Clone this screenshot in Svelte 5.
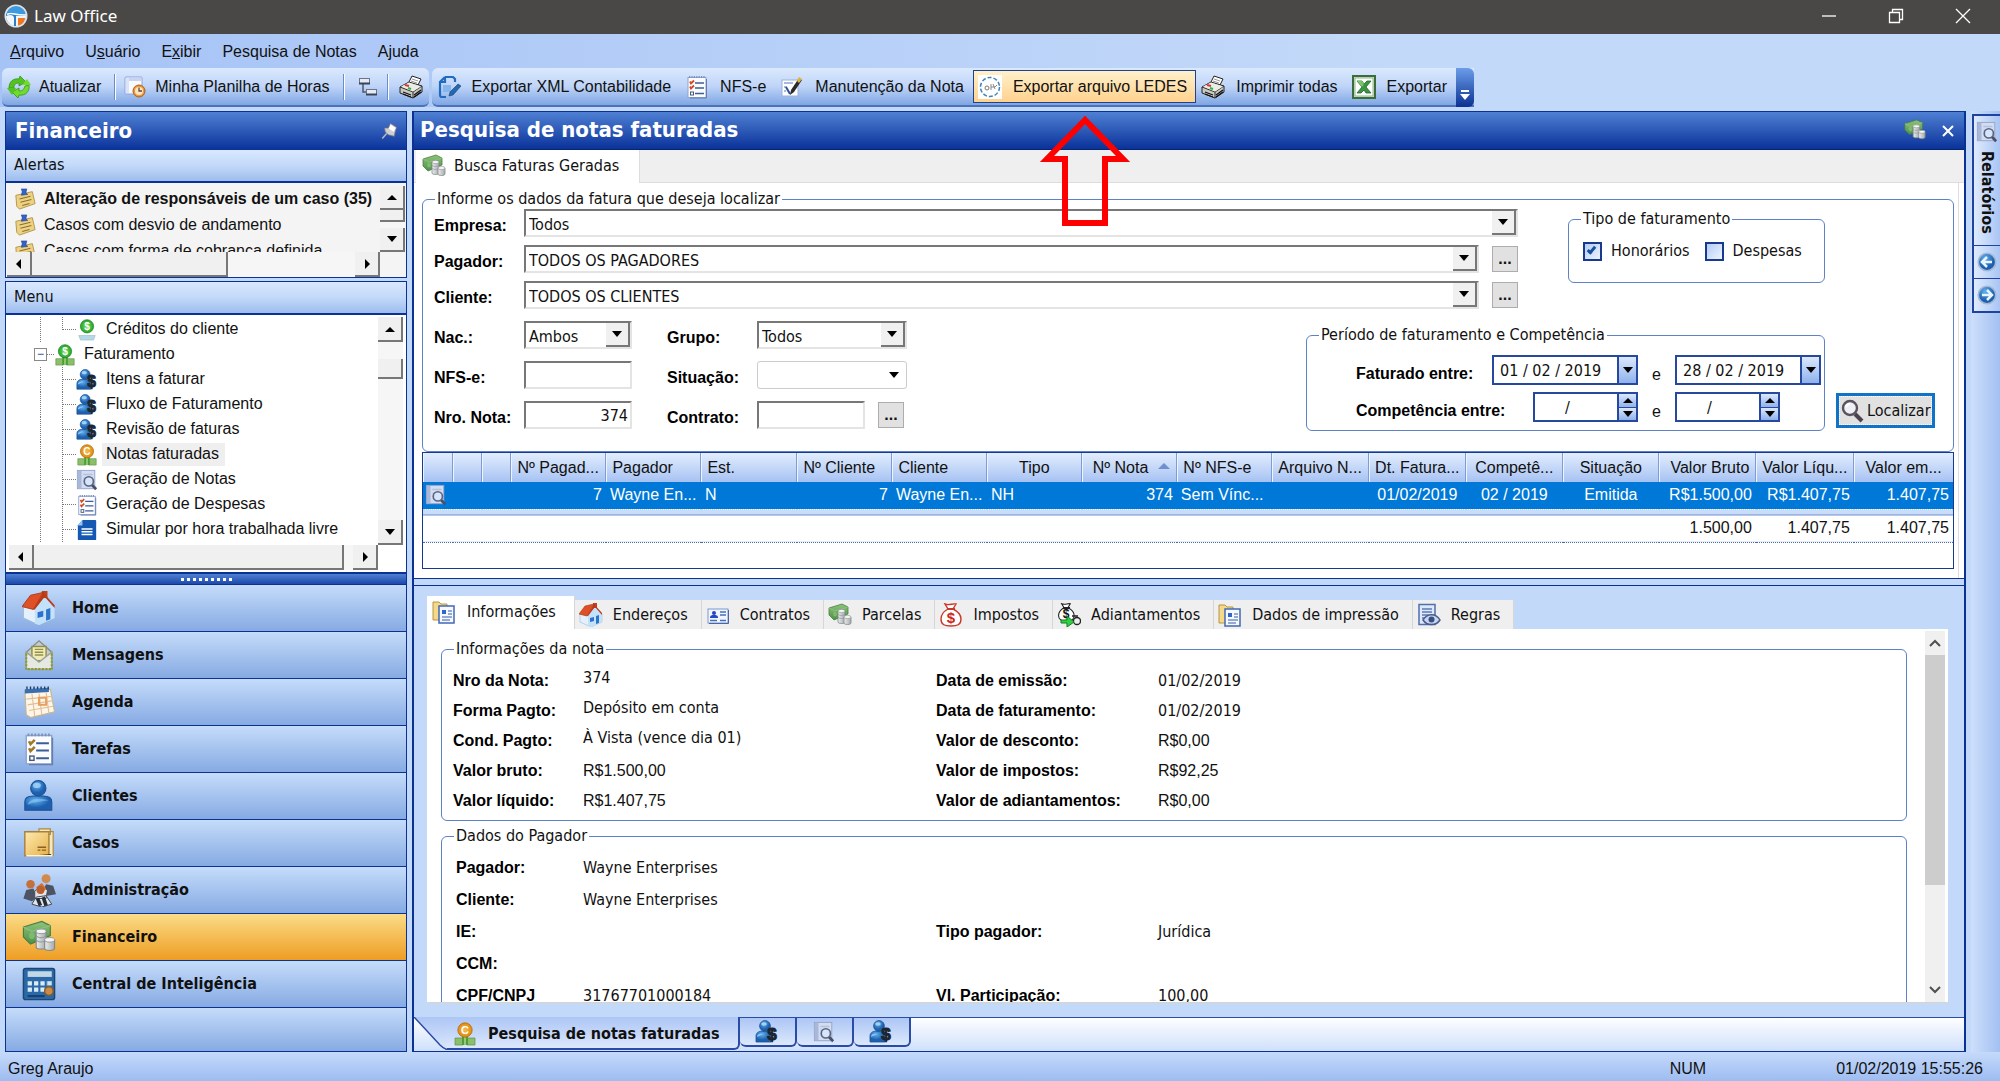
<script lang="ts">
	type NavItem = { label: string; icon: string };
	type Column = { label: string; width: number; align?: string; head?: string; sorted?: boolean };

	let activeNav = $state('Financeiro');
	let activeTab = $state('Informações');
	let fees = $state(true);
	let expenses = $state(false);

	const menus = [
		['', 'A', 'rquivo'],
		['U', 's', 'uário'],
		['E', 'x', 'ibir'],
		['Pesquisa de Notas', '', ''],
		['A', 'j', 'uda']
	];

	const tools: NavItem[] = [
		{ label: 'Exportar XML Contabilidade', icon: 'export' },
		{ label: 'NFS-e', icon: 'list' },
		{ label: 'Manutenção da Nota', icon: 'edit' },
		{ label: 'Exportar arquivo LEDES', icon: 'ledes' },
		{ label: 'Imprimir todas', icon: 'printer' },
		{ label: 'Exportar', icon: 'excel' }
	];

	const alerts = [
		'Alteração de responsáveis de um caso (35)',
		'Casos com desvio de andamento',
		'Casos com forma de cobrança definida'
	];

	const treeItems: NavItem[] = [
		{ label: 'Itens a faturar', icon: 'payer' },
		{ label: 'Fluxo de Faturamento', icon: 'payer' },
		{ label: 'Revisão de faturas', icon: 'payer' },
		{ label: 'Notas faturadas', icon: 'invoice' },
		{ label: 'Geração de Notas', icon: 'preview' },
		{ label: 'Geração de Despesas', icon: 'list' },
		{ label: 'Simular por hora trabalhada livre', icon: 'doc' }
	];

	const nav: NavItem[] = [
		{ label: 'Home', icon: 'house' },
		{ label: 'Mensagens', icon: 'mail' },
		{ label: 'Agenda', icon: 'calendar' },
		{ label: 'Tarefas', icon: 'tasks' },
		{ label: 'Clientes', icon: 'person' },
		{ label: 'Casos', icon: 'folder' },
		{ label: 'Administração', icon: 'team' },
		{ label: 'Financeiro', icon: 'money' },
		{ label: 'Central de Inteligência', icon: 'calc' }
	];

	const columns: Column[] = [
		{ label: '', width: 30 },
		{ label: '', width: 29 },
		{ label: '', width: 29 },
		{ label: 'Nº Pagad...', width: 95, align: 'right', head: 'left' },
		{ label: 'Pagador', width: 95 },
		{ label: 'Est.', width: 96 },
		{ label: 'Nº Cliente', width: 95, align: 'right', head: 'left' },
		{ label: 'Cliente', width: 95 },
		{ label: 'Tipo', width: 95, head: 'center' },
		{ label: 'Nº Nota', width: 95, align: 'right', sorted: true },
		{ label: 'Nº NFS-e', width: 95 },
		{ label: 'Arquivo N...', width: 97 },
		{ label: 'Dt. Fatura...', width: 97, align: 'center' },
		{ label: 'Competê...', width: 97, align: 'center' },
		{ label: 'Situação', width: 96, align: 'center' },
		{ label: 'Valor Bruto', width: 97, align: 'right' },
		{ label: 'Valor Líqu...', width: 98, align: 'right' },
		{ label: 'Valor em...', width: 99, align: 'right', head: 'center' }
	];
	const totalWidth = columns.reduce((sum, c) => sum + c.width, 0);

	const row = ['', '', '', '7', 'Wayne En...', 'N', '7', 'Wayne En...', 'NH', '374', 'Sem Vínc...', '', '01/02/2019', '02 / 2019', 'Emitida', 'R$1.500,00', 'R$1.407,75', '1.407,75'];
	const totals = ['1.500,00', '1.407,75', '1.407,75'];

	const detailTabs: NavItem[] = [
		{ label: 'Informações', icon: 'info' },
		{ label: 'Endereços', icon: 'house' },
		{ label: 'Contratos', icon: 'card' },
		{ label: 'Parcelas', icon: 'money' },
		{ label: 'Impostos', icon: 'tax' },
		{ label: 'Adiantamentos', icon: 'advance' },
		{ label: 'Dados de impressão', icon: 'info' },
		{ label: 'Regras', icon: 'rules' }
	];

	const noteInfo = [
		['Nro da Nota:', '374', 'Data de emissão:', '01/02/2019'],
		['Forma Pagto:', 'Depósito em conta', 'Data de faturamento:', '01/02/2019'],
		['Cond. Pagto:', 'À Vista (vence dia 01)', 'Valor de desconto:', 'R$0,00'],
		['Valor bruto:', 'R$1.500,00', 'Valor de impostos:', 'R$92,25'],
		['Valor líquido:', 'R$1.407,75', 'Valor de adiantamentos:', 'R$0,00']
	];

	const payerInfo = [
		['Pagador:', 'Wayne Enterprises', '', ''],
		['Cliente:', 'Wayne Enterprises', '', ''],
		['IE:', '', 'Tipo pagador:', 'Jurídica'],
		['CCM:', '', '', ''],
		['CPF/CNPJ', '31767701000184', 'Vl. Participação:', '100,00']
	];

	// values typed in as money keep the grid face
	const isMoney = (value: string) => value.startsWith('R$');
</script>

{#snippet icon(name: string, size: number = 24)}
	<svg class="icon" width={size} height={size} viewBox="0 0 24 24" aria-hidden="true">
		{#if name === 'logo'}
			<circle cx="12" cy="12" r="11.5" fill="#dfe3e8" />
			<circle cx="12" cy="12" r="10" fill="#3d9ade" />
			<path d="M2 11c4-3 8-1 10 1v10C6 22 2 17 2 11z" fill="#f2f6fa" />
			<path d="M2 10c3-3 8-2 10 1v11h-2v-8c0-3-4-4-8-2z" fill="#2b7fca" />
			<path d="M12 12h10c0 6-4 10-10 10z" fill="#f2f6fa" />
			<path d="M14 14h7c0 4-3 7-7 7.500z" fill="#ef7722" />
			<path d="M3 10.500c5-3 7 1 19 .5" stroke="#fff" stroke-width="1.500" fill="none" />
		{:else if name === 'refresh'}
			<path d="M2 13c0-6 4-10 10-9l1-3 6 6-7 4V8c-3 0-5 1-5 5z" fill="#52c41f" stroke="#38921a" stroke-width=".8" />
			<path d="M22 10c1 6-3 11-10 10l-1 3-6-6 7-4v3c4 0 5-2 6-5z" fill="#6edc28" stroke="#38921a" stroke-width=".8" />
			<path d="M0 13h9l-4 7z" fill="#52c41f" />
			<path d="M15 10h9l-4-6z" fill="#6edc28" />
		{:else if name === 'timesheet'}
			<rect x="2" y="2" width="17" height="17" rx="1" fill="#f8faff" stroke="#8ea4d8" />
			<path d="M3 3h15v3H3z" fill="#c6d4f3" />
			<path d="M3 18V3h3v15z" fill="#dae3f8" />
			<circle cx="16" cy="16" r="6" fill="#ee9838" stroke="#b25e16" />
			<circle cx="16" cy="16" r="4" fill="#fbe6c2" />
			<path d="M16 12.500V16h3" stroke="#644" stroke-width="1.300" fill="none" />
		{:else if name === 'flow'}
			<path d="M8 8v9h7" fill="none" stroke="#556" stroke-width="1.500" />
			<rect x="4.500" y="3.500" width="10" height="5" fill="#e6eaf2" stroke="#6b7488" />
			<rect x="11.500" y="14.500" width="10" height="5" fill="#e6eaf2" stroke="#6b7488" />
			<path d="M4 8.500h11M11 19.500h11" stroke="#39435a" stroke-width="2" />
		{:else if name === 'printer'}
			<path d="M9 9l4-8 9 3-4 8z" fill="#fff" stroke="#222" />
			<path d="M13 4l6 2M12 6l6 2" stroke="#999" />
			<path d="M1 12l9-5 13 4v6l-9 6-13-5z" fill="#c9c9c2" stroke="#222" />
			<path d="M1 12l13 5 9-6M14 17v6" fill="none" stroke="#333" />
			<path d="M2 11.500l8-4 12 4-8 5z" fill="#ecece6" />
			<path d="M6 10l4 1" stroke="#e03030" stroke-width="2" />
			<path d="M9 13l3 1" stroke="#25b84a" stroke-width="2" />
			<path d="M4 17l8 3M4 19l8 3M15 20l7-5M15 22l7-5" stroke="#111" stroke-width="1.200" />
		{:else if name === 'export'}
			<path d="M8 2h8l2 2v3M8 2L3 7v13q0 2 2 2h4M8 2v5H3" fill="none" stroke="#1f6cc0" stroke-width="2.200" />
			<path d="M6 10h8v7H6z" fill="#86b6ec" />
			<path d="M12 21l1-4 8-8 3 2-8 9z" fill="#2468b0" stroke="#173f7a" stroke-width=".6" />
		{:else if name === 'list' || name === 'tasks'}
			<rect x="3" y="2.500" width="18" height="20" fill="#fafcff" stroke="#8fa3cf" />
			<path d="M4 2h16" stroke="#7c8fb8" stroke-width="2" stroke-dasharray="1.200 1.200" />
			<path d="M21.500 4v19H5" fill="none" stroke="#667dae" />
			<path d="M10 8h9M10 13h9M10 18.500h9" stroke="#3d5d96" stroke-width="1.400" />
			<path d="M5 6.500l1 2 3-3M5 11.500l1 2 3-3" fill="none" stroke={name === 'list' ? '#d24a22' : '#a07826'} stroke-width="1.800" />
			<rect x="5.500" y="17" width="3" height="3" fill="none" stroke="#4a5878" />
		{:else if name === 'edit'}
			<rect x="2" y="5" width="16" height="16" fill="#fff" stroke="#9db0dc" />
			<path d="M4 8h9M4 12h3M4 16h2" stroke="#8ba3d6" stroke-width="1.500" />
			<path d="M6 12l4 7" stroke="#35508c" stroke-width="2" />
			<path d="M10 20l1-5 8-12 3 2-8 12z" fill="#2b2b2b" />
			<path d="M17 6l2-4 3 2-3 4z" fill="#e0b53a" />
		{:else if name === 'ledes'}
			<rect width="24" height="24" fill="#fff" />
			<circle cx="12" cy="12" r="9.500" fill="none" stroke="#3f83b8" stroke-width="1.500" stroke-dasharray="4 2" />
			<circle cx="9" cy="13" r="2" fill="none" stroke="#777" />
			<path d="M13 9v6M13 12h4l2-2M15 9l2 5" stroke="#888" fill="none" />
		{:else if name === 'excel'}
			<rect x="1" y="1" width="22" height="22" fill="#d3e7cc" stroke="#3d6b3b" stroke-width="2" />
			<rect x="3" y="3" width="18" height="18" fill="#fff" stroke="#8db987" />
			<path d="M5 6h5l2 3 3-3h4l-5 6 5 6h-5l-2-3-3 3H5l5-6z" fill="#3c9542" stroke="#1f6a28" stroke-width=".8" />
			<path d="M5 6h5l2 3-2 3z" fill="#7cc46c" />
		{:else if name === 'pin'}
			<path d="M3 22l7-8" stroke="#b8b8c0" stroke-width="2" />
			<path d="M6 8l5 0 3-6 8 5-2 7-1 5-4-1-4-1-4-4z" fill="#cfcfd4" stroke="#77787e" />
			<path d="M14 3l7 5-3 5-6-4z" fill="#fff" />
		{:else if name === 'sticky'}
			<path d="M2 8l18-4 3 13-17 6-3-3z" fill="#eed283" stroke="#b0934a" />
			<path d="M6 12l12-3M7 15.500l12-3M9 19l8-2" stroke="#8a6f30" stroke-width="1.200" />
			<path d="M8 1h6l-1 4 2 2-7 1 1-4z" fill="#3564c8" stroke="#1d3f8c" stroke-width=".6" />
		{:else if name === 'money'}
			<path d="M1 5l13-4 6 3v7L6 17 1 12z" fill="url(#bill)" stroke="#4b7d43" stroke-width=".8" />
			<path d="M1 5l6 3 13-4" fill="none" stroke="#8fbf80" />
			<ellipse cx="7" cy="11" rx="2" ry="2.500" fill="#7fb86f" />
			<path d="M10 8v11c0 2 7 2 7 0V8z" fill="url(#coin)" stroke="#84888a" stroke-width=".8" />
			<ellipse cx="13.500" cy="8" rx="3.500" ry="1.600" fill="#f4f5f5" stroke="#8d9193" stroke-width=".6" />
			<path d="M10 11c1 2 6 2 7 0M10 14c1 2 6 2 7 0" fill="none" stroke="#90959a" stroke-width=".7" />
			<path d="M16 14v6c0 2 7 2 7 0v-6z" fill="url(#coin)" stroke="#84888a" stroke-width=".8" />
			<ellipse cx="19.500" cy="14" rx="3.500" ry="1.600" fill="#f4f5f5" stroke="#8d9193" stroke-width=".6" />
		{:else if name === 'credit' || name === 'billing' || name === 'invoice'}
			{#if name === 'credit'}
				<path d="M3 18h18l-2 5H5z" fill="#b8d8e6" stroke="#8db4c6" stroke-width=".6" />
			{:else}
				<path d="M2 16h8v7H2zM14 16h8v7h-8z" fill="#8cbf6a" stroke="#5d9440" stroke-width=".7" />
				<path d="M9 13h6v10H9z" fill="#4f9c3c" />
				<path d="M12 15v8" stroke="#a9dd88" stroke-width="1.500" />
			{/if}
			<circle cx="12" cy="8" r="7.200" fill={name === 'invoice' ? 'url(#gold)' : 'url(#green)'} stroke={name === 'invoice' ? '#b66d0a' : '#1b8420'} stroke-width=".8" />
			<text x="12" y="12" text-anchor="middle" font-family="Liberation Sans, sans-serif" font-weight="bold" font-size="11" fill="#fff">{name === 'invoice' ? 'C' : '$'}</text>
		{:else if name === 'payer'}
			<path d="M1 22v-6c0-4 4-5 7-5s8 1 8 5v6z" fill="url(#blue)" stroke="#1b5398" stroke-width=".8" />
			<circle cx="10" cy="6" r="5.400" fill="url(#blue)" stroke="#1b5398" stroke-width=".8" />
			<ellipse cx="9" cy="4" rx="2.800" ry="1.800" fill="#b4dcf8" opacity=".8" />
			<path d="M2 17c0-3 3-4 6-3z" fill="#8cc8f4" />
			<text x="17" y="20" text-anchor="middle" font-family="Liberation Sans, sans-serif" font-weight="bold" font-size="17" fill="#1c2530" stroke="#1c2530">$</text>
		{:else if name === 'person'}
			<path d="M2 22v-6c0-4 4-4 6-4h7c3 0 6 1 6 4v6z" fill="url(#blue)" stroke="#1b5398" stroke-width=".8" />
			<circle cx="11.500" cy="6.500" r="5.400" fill="url(#blue)" stroke="#1b5398" stroke-width=".8" />
			<ellipse cx="10.500" cy="4.500" rx="2.800" ry="1.800" fill="#b4dcf8" opacity=".7" />
			<path d="M4 18c2-5 9-4 15-3-5 1-10 1-15 3z" fill="#8cc8f4" opacity=".6" />
		{:else if name === 'preview'}
			<rect x="1.500" y="1.500" width="19" height="20" fill="#d3ddf2" stroke="#93a3c6" />
			<path d="M2 2h4v19H2z" fill="#a9b7d8" />
			<path d="M8 6h10M8 10h3" stroke="#b4c1de" stroke-width="1.500" />
			<path d="M17 17l5 5" stroke="#4a4f62" stroke-width="3" />
			<circle cx="14" cy="13.500" r="5" fill="#d7e5fb" stroke="#5a6380" stroke-width="1.800" />
		{:else if name === 'doc'}
			<path d="M7 1h14q1 0 1 1v20q0 1-1 1H3q-1 0-1-1V7z" fill="#1458b4" />
			<path d="M7 1v6H2z" fill="#9cc2f0" />
			<path d="M6 11h12M6 14h12M6 17h12" stroke="#fff" stroke-width="1.600" />
		{:else if name === 'house'}
			<path d="M1 11l8 2 2-3 12 1v8l-11 5-11-5z" fill="#e4f1fc" stroke="#9bb8d6" stroke-width=".6" />
			<path d="M9 23V13l7-9 7 7v8l-11 5z" fill="#c3e2fa" />
			<path d="M17 13l3-1v8l-3 1z" fill="#2b74c8" />
			<path d="M11 15l4-1v4l-4 1z" fill="#2c6fd0" />
			<path d="M14 0h4v5h-4z" fill="#c4401c" />
			<path d="M0 11L6 3l9-2-7 12z" fill="#df5026" stroke="#a63812" stroke-width=".6" />
			<path d="M15 1l8 9v2l-7-8-7 9H8z" fill="#b83a18" />
		{:else if name === 'mail'}
			<path d="M3 10l9-8 9 8v12H3z" fill="#c8cdc6" stroke="#858d88" />
			<path d="M7 6h10v10H7z" fill="#f0ecb4" stroke="#8f8c50" />
			<path d="M9 8h6M9 10h6M9 12h6" stroke="#90904c" />
			<path d="M3 10l9 7 9-7v12H3z" fill="#e6e9e2" stroke="#9aa39c" />
			<path d="M4 22h17M3 11v11M21 11v11" stroke="#8c9c28" stroke-width="1.500" stroke-dasharray="1.500 1" />
		{:else if name === 'calendar'}
			<path d="M2 4l18-1 3 16-17 4-3-2z" fill="#fff6e8" stroke="#c5b494" stroke-width=".8" />
			<path d="M2 3l17-1v3L2 6z" fill="#3a6fae" />
			<path d="M3 2h16" stroke="#1f3f6c" stroke-width="2" stroke-dasharray="1 1.500" />
			<path d="M3 10l18-2M4 14l18-3M5 18l17-3M7 6l2 16M12 6l2 15M17 5l2 15" stroke="#dfc09a" stroke-width=".8" />
			<rect x="12" y="9" width="5" height="5" fill="none" stroke="#e8a060" stroke-width="1.400" />
		{:else if name === 'folder'}
			<path d="M12 2h8v4h-8zM16 4h6v17h-6z" fill="#f7e8bc" stroke="#a9883c" stroke-width=".8" />
			<path d="M2 4h17v17H2z" fill="url(#gold2)" stroke="#a9803a" />
			<path d="M3 21h18v-1" stroke="#fff6d4" />
			<path d="M11 15h6M11 17h2M14 17h3" stroke="#836224" />
		{:else if name === 'team'}
			<path d="M1 18l2-6 5-1 3 6-4 3zM15 12l2-4 5 1 2 6-6 1z" fill="#4b5364" />
			<path d="M9 13l4-4 5 3-1 6H9zM7 22l3-5 7-1 4 6-7 2z" fill="#e2e5ea" stroke="#444b58" stroke-width=".7" />
			<path d="M11 18l2 5M15 17l2 6" stroke="#262c38" stroke-width="2.500" />
			<path d="M10 10l4-3 3 4-3 4z" fill="#df6a2c" />
			<circle cx="6" cy="8" r="3" fill="#c4703a" />
			<circle cx="17" cy="4" r="3.200" fill="#d08a50" />
			<circle cx="13" cy="12" r="2.800" fill="#b8602c" />
		{:else if name === 'calc'}
			<rect x="1" y="1" width="22" height="22" rx="1.500" fill="#2b68a8" stroke="#1c4674" />
			<rect x="4" y="3" width="17" height="4" fill="#c3d8e6" />
			<path d="M4 11.500h14M4 16h14" stroke="#d9ecf4" stroke-width="3" stroke-dasharray="3 1.500" />
			<path d="M4 20.500h12" stroke="#173f70" stroke-width="1.500" />
			<path d="M18 10h3v3h-3z" fill="#cfe4ee" />
			<circle cx="19" cy="17" r="3" fill="#c98b48" stroke="#8c5a24" />
		{:else if name === 'info'}
			<path d="M1 2h6l2 2h6v16H1z" fill="#f4d98a" stroke="#b89443" />
			<rect x="7" y="6" width="15" height="17" fill="#f5f8ff" stroke="#4269b4" stroke-width="1.500" />
			<rect x="10" y="10" width="4" height="4" fill="#2d66cc" />
			<path d="M16 11h4M16 14h4M10 17h10M10 20h8" stroke="#355da8" stroke-width="1.200" />
		{:else if name === 'card'}
			<rect x="2" y="6" width="20" height="14" fill="#f0f5ff" stroke="#7d98cc" />
			<path d="M22.500 7v13.500H3" fill="none" stroke="#4c66a4" />
			<path d="M4 15c0-3 2-3 4-3s4 0 4 3z" fill="#2548c0" />
			<circle cx="8" cy="10" r="2" fill="#2548c0" />
			<path d="M14 9h6M14 12h6M4 17.500h7M14 17.500h6" stroke="#4870b8" stroke-width="1.300" />
		{:else if name === 'tax' || name === 'advance'}
			<path d="M6 1c4 2 8-1 11 0l-3 5q8 4 8 10c0 6-4 7-10 7S2 22 2 16q0-6 7-10z" fill="#fff" stroke={name === 'tax' ? '#c8392a' : '#222'} stroke-width="1.400" transform={name === 'advance' ? 'scale(.78)' : undefined} />
			<path d={name === 'tax' ? 'M8 6h8' : 'M6 5h7'} stroke={name === 'tax' ? '#c8392a' : '#222'} stroke-width="2" />
			<text x={name === 'tax' ? 12 : 9} y={name === 'tax' ? 20 : 15} text-anchor="middle" font-family="Liberation Sans, sans-serif" font-weight="bold" font-size={name === 'tax' ? 15 : 12} fill={name === 'tax' ? '#d02418' : '#111'}>$</text>
			{#if name === 'advance'}
				<circle cx="20" cy="18" r="3.500" fill="#eee" stroke="#222" stroke-width="1.300" />
				<path d="M15 13h6" stroke="#222" stroke-width="1.500" />
				<path d="M4 17h6v-4l7 6-7 5v-4H4z" fill="#2fd044" stroke="#157a22" />
			{/if}
		{:else if name === 'rules'}
			<rect x="2" y="1.500" width="16" height="20" fill="#dfe8fa" stroke="#4f6fae" stroke-width="1.500" />
			<path d="M5 6h10M5 9h10M5 12h6M5 15h4" stroke="#5b79b4" stroke-width="1.400" />
			<path d="M6 17c4-7 13-7 17 0-4 6-13 6-17 0z" fill="#c6d6f4" stroke="#4a5c86" stroke-width="1.500" />
			<circle cx="14.500" cy="16.500" r="3" fill="#3a4f80" />
		{:else if name === 'find'}
			<path d="M15 15l7 7" stroke="#4b4450" stroke-width="4" />
			<circle cx="10" cy="9" r="7" fill="#eef0f6" stroke="#5a525e" stroke-width="2.400" />
			<path d="M6 8q1-3 4-3" stroke="#fff" stroke-width="2" fill="none" />
		{:else if name === 'back' || name === 'forward'}
			<circle cx="12" cy="12" r="10.500" fill="url(#blue)" stroke="#a3b8d4" stroke-width="2" />
			<path d={name === 'back' ? 'M18 12H7M12 6l-6 6 6 6' : 'M6 12h11M12 6l6 6-6 6'} fill="none" stroke="#e8f4ff" stroke-width="3" />
		{/if}
	</svg>
{/snippet}

{#snippet triangle(dir: string)}
	<svg class="tri" width="10" height="10" viewBox="0 0 10 10" aria-hidden="true">
		{#if dir === 'up'}
			<path d="M0 8l5-5 5 5z" />
		{:else if dir === 'down'}
			<path d="M0 2h10L5 8z" />
		{:else if dir === 'left'}
			<path d="M7 0v10L2 5z" />
		{:else}
			<path d="M3 0v10l5-5z" />
		{/if}
	</svg>
{/snippet}

{#snippet combo(id: string, value: string)}
	<span class="combo">
		<select {id}><option>{value}</option></select>
		<span class="combo-arrow">{@render triangle('down')}</span>
	</span>
{/snippet}

{#snippet spinner(label: string)}
	<span class="picker short">
		<input type="text" aria-label={label} value="/" />
		<span class="spin">
			<button type="button" aria-label="Aumentar">{@render triangle('up')}</button>
			<button type="button" aria-label="Diminuir">{@render triangle('down')}</button>
		</span>
	</span>
{/snippet}

<svg class="defs" width="0" height="0" aria-hidden="true">
	<defs>
		<linearGradient id="bill" x1="0" y1="0" x2="0" y2="1"><stop offset="0" stop-color="#8cc47a" /><stop offset="1" stop-color="#4c9147" /></linearGradient>
		<linearGradient id="coin"><stop offset="0" stop-color="#eceeee" /><stop offset="1" stop-color="#a4a9ab" /></linearGradient>
		<radialGradient id="green"><stop offset="0" stop-color="#7be35c" /><stop offset="1" stop-color="#23a32b" /></radialGradient>
		<radialGradient id="gold"><stop offset="0" stop-color="#f8bc4c" /><stop offset="1" stop-color="#dc8a12" /></radialGradient>
		<linearGradient id="gold2" x1="0" y1="0" x2="1" y2="1"><stop offset="0" stop-color="#fdebb0" /><stop offset="1" stop-color="#e8b04a" /></linearGradient>
		<radialGradient id="blue" cx=".4" cy=".3"><stop offset="0" stop-color="#63b2ee" /><stop offset="1" stop-color="#1e60b0" /></radialGradient>
		<linearGradient id="sheet" x1="0" y1="0" x2="0" y2="1"><stop offset="0" stop-color="#adc6f5" /><stop offset="1" stop-color="#dce8fc" /></linearGradient>
	</defs>
</svg>

<div class="window">
	<header class="titlebar">
		{@render icon('logo')}
		<span class="app-name">Law Office</span>
		<button aria-label="Minimizar"><svg width="16" height="16" viewBox="0 0 16 16"><path d="M1 8h14" /></svg></button>
		<button aria-label="Restaurar"><svg width="16" height="16" viewBox="0 0 16 16"><path d="M1.500 4.500h10v10h-10zM4.500 4V1.500h10v10H12" /></svg></button>
		<button aria-label="Fechar"><svg width="16" height="16" viewBox="0 0 16 16"><path d="M1 1l14 14M15 1L1 15" /></svg></button>
	</header>

	<nav class="menubar">
		{#each menus as [before, key, after]}
			<button>{before}<u>{key}</u>{after}</button>
		{/each}
	</nav>

	<div class="toolbars">
		<div class="toolbar first">
			<button>{@render icon('refresh')}Atualizar</button>
			<i class="sep"></i>
			<button>{@render icon('timesheet')}Minha Planilha de Horas</button>
			<i class="sep"></i>
			<button class="only" aria-label="Fluxo">{@render icon('flow')}</button>
			<i class="sep"></i>
			<button class="only" aria-label="Imprimir">{@render icon('printer')}</button>
		</div>
		<div class="toolbar">
			{#each tools as tool}
				<button class:hot={tool.icon === 'ledes'}>
					{@render icon(tool.icon)}{tool.label}
					{#if tool.icon === 'ledes'}
						<svg class="pointer" width="92" height="112" viewBox="0 0 92 112" aria-hidden="true">
							<path d="M46 4L8 43h18v64h40V43h18z" />
						</svg>
					{/if}
				</button>
			{/each}
			<button class="more" aria-label="Mais opções">
				<svg width="10" height="12" viewBox="0 0 10 12"><path d="M1 2h8" stroke="#fff" stroke-width="2" /><path d="M0 5h10l-5 6z" fill="#fff" /></svg>
			</button>
		</div>
	</div>

	<div class="workspace">
		<aside class="sidebar">
			<section class="box">
				<h2 class="caption">Financeiro {@render icon('pin', 18)}</h2>
				<h3 class="subcaption">Alertas</h3>
				<div class="pane alerts">
					<ul class="pane-body">
						{#each alerts as alert, i}
							<li class:unread={i === 0}>{@render icon('sticky', 22)}{alert}</li>
						{/each}
					</ul>
					<div class="vscroll">
						<button aria-label="Rolar para cima">{@render triangle('up')}</button>
						<span class="thumb thin"></span>
						<button class="end" aria-label="Rolar para baixo">{@render triangle('down')}</button>
					</div>
					<div class="hscroll">
						<button aria-label="Rolar para a esquerda">{@render triangle('left')}</button>
						<span class="thumb half"></span>
						<button class="end" aria-label="Rolar para a direita">{@render triangle('right')}</button>
					</div>
				</div>
			</section>

			<section class="box grow">
				<h3 class="subcaption">Menu</h3>
				<div class="pane tree">
					<ul class="pane-body">
						<li>
							<i class="trunk"></i><i class="branch last"></i>{@render icon('credit', 22)}
							<span class="node">Créditos do cliente</span>
						</li>
						<li>
							<i class="expander">−</i><i class="twig"></i>{@render icon('billing', 22)}
							<span class="node">Faturamento</span>
						</li>
						{#each treeItems as item}
							<li>
								<i class="trunk"></i><i class="branch"></i>{@render icon(item.icon, 22)}
								<span class="node" class:selected={item.icon === 'invoice'}>{item.label}</span>
							</li>
						{/each}
					</ul>
					<div class="vscroll">
						<button aria-label="Rolar para cima">{@render triangle('up')}</button>
						<span class="thumb short"></span>
						<button class="end" aria-label="Rolar para baixo">{@render triangle('down')}</button>
					</div>
					<div class="hscroll">
						<button aria-label="Rolar para a esquerda">{@render triangle('left')}</button>
						<span class="thumb wide"></span>
						<button class="end" aria-label="Rolar para a direita">{@render triangle('right')}</button>
					</div>
				</div>
				<div class="splitter">
					{#each Array(9) as _}<i></i>{/each}
				</div>
				<nav class="modules">
					{#each nav as item}
						<button class:active={activeNav === item.label} onclick={() => (activeNav = item.label)}>
							{@render icon(item.icon, 34)}{item.label}
						</button>
					{/each}
					<div class="filler"></div>
				</nav>
			</section>
		</aside>

		<main class="document">
			<h1 class="caption">
				Pesquisa de notas faturadas
				<span class="caption-tools">
					{@render icon('money', 22)}
					<button aria-label="Fechar documento"><svg width="12" height="12" viewBox="0 0 12 12"><path d="M1 1l10 10M11 1L1 11" stroke="#fff" stroke-width="2" /></svg></button>
				</span>
			</h1>

			<section class="search">
				<div class="tabstrip">
					<button class="search-tab">{@render icon('money')}Busca Faturas Geradas</button>
				</div>
				<form class="search-body" onsubmit={(e) => e.preventDefault()}>
					<fieldset class="filters">
						<legend>Informe os dados da fatura que deseja localizar</legend>
						<div class="filter-row">
							<div class="wide-fields">
								<div class="field">
									<label for="empresa">Empresa:</label>
									{@render combo('empresa', 'Todos')}
								</div>
								<div class="field">
									<label for="pagador">Pagador:</label>
									{@render combo('pagador', 'TODOS OS PAGADORES')}
									<button class="dots" type="button">...</button>
								</div>
								<div class="field">
									<label for="cliente">Cliente:</label>
									{@render combo('cliente', 'TODOS OS CLIENTES')}
									<button class="dots" type="button">...</button>
								</div>
							</div>
							<fieldset class="kind">
								<legend>Tipo de faturamento</legend>
								<div class="checks">
									<label><input type="checkbox" bind:checked={fees} />Honorários</label>
									<label><input type="checkbox" bind:checked={expenses} />Despesas</label>
								</div>
							</fieldset>
						</div>

						<div class="filter-row lower">
							<div class="small-fields">
								<div class="field">
									<label for="nac">Nac.:</label>
									{@render combo('nac', 'Ambos')}
								</div>
								<div class="field">
									<label for="grupo">Grupo:</label>
									{@render combo('grupo', 'Todos')}
								</div>
								<div class="field">
									<label for="nfse">NFS-e:</label>
									<input id="nfse" type="text" />
								</div>
								<div class="field flat">
									<label for="situacao">Situação:</label>
									{@render combo('situacao', '')}
								</div>
								<div class="field">
									<label for="nota">Nro. Nota:</label>
									<input id="nota" class="num" type="text" value="374" />
								</div>
								<div class="field">
									<label for="contrato">Contrato:</label>
									<input id="contrato" type="text" />
									<button class="dots" type="button">...</button>
								</div>
							</div>
							<fieldset class="period">
								<legend>Período de faturamento e Competência</legend>
								<div class="range">
									<label for="de">Faturado entre:</label>
									<span class="picker">
										<input id="de" type="text" value="01 / 02 / 2019" />
										<button type="button" aria-label="Abrir calendário">{@render triangle('down')}</button>
									</span>
									<span class="and">e</span>
									<span class="picker">
										<input type="text" aria-label="Faturado até" value="28 / 02 / 2019" />
										<button type="button" aria-label="Abrir calendário">{@render triangle('down')}</button>
									</span>
								</div>
								<div class="range">
									<span class="range-label">Competência entre:</span>
									{@render spinner('Competência inicial')}
									<span class="and">e</span>
									<span class="slot">{@render spinner('Competência final')}</span>
								</div>
							</fieldset>
							<button class="find" type="submit"><span>{@render icon('find')}Localizar</span></button>
						</div>
					</fieldset>

					<div class="grid">
						<table>
							<colgroup>
								{#each columns as col}
									<col style="width: {(col.width / totalWidth) * 100}%" />
								{/each}
							</colgroup>
							<thead>
								<tr>
									{#each columns as col}
										<th class={col.head ?? col.align}>
											{col.label}{#if col.sorted}<svg class="sort" width="12" height="8" viewBox="0 0 12 8"><path d="M0 7l6-6 6 6z" fill="#6f8fd0" /></svg>{/if}
										</th>
									{/each}
								</tr>
							</thead>
							<tbody>
								<tr class="current">
									{#each row as cell, i}
										<td class={columns[i].align}>
											{#if i === 0}{@render icon('preview', 22)}{:else}{cell}{/if}
										</td>
									{/each}
								</tr>
							</tbody>
							<tfoot>
								<tr>
									<td colspan="15"></td>
									{#each totals as total}
										<td class="right">{total}</td>
									{/each}
								</tr>
							</tfoot>
						</table>
					</div>
				</form>
			</section>

			<section class="details">
				<div class="detail-tabs" role="tablist">
					{#each detailTabs as tab}
						<button role="tab" aria-selected={activeTab === tab.label} class:active={activeTab === tab.label} onclick={() => (activeTab = tab.label)}>
							{@render icon(tab.icon)}{tab.label}
						</button>
					{/each}
				</div>
				<div class="detail-pane">
					<div class="detail-content">
						<fieldset>
							<legend>Informações da nota</legend>
							<dl class="info">
								{#each noteInfo as line}
									{#each line as cell, i}
										{#if i % 2 === 0}<dt>{cell}</dt>{:else}<dd class:money={isMoney(cell)} class:raised={i === 1 && !isMoney(cell)}>{cell}</dd>{/if}
									{/each}
								{/each}
							</dl>
						</fieldset>
						<fieldset>
							<legend>Dados do Pagador</legend>
							<dl class="info payer">
								{#each payerInfo as line}
									{#each line as cell, i}
										{#if i % 2 === 0}<dt>{cell}</dt>{:else}<dd>{cell}</dd>{/if}
									{/each}
								{/each}
							</dl>
						</fieldset>
					</div>
					<div class="modern-scroll">
						<svg width="12" height="8" viewBox="0 0 12 8"><path d="M1 7l5-5 5 5" /></svg>
						<span></span>
						<svg width="12" height="8" viewBox="0 0 12 8"><path d="M1 1l5 5 5-5" /></svg>
					</div>
				</div>
			</section>

			<div class="doc-tabs">
				<svg class="slant" width="33" height="33" viewBox="0 0 33 33" aria-hidden="true">
					<path d="M0 0h33v33h-3z" fill="url(#sheet)" />
					<path d="M0 0l26 28q4 4 7 4.500" fill="none" stroke="#2a4ba6" stroke-width="1.500" />
				</svg>
				<button class="doc-tab current">{@render icon('invoice')}Pesquisa de notas faturadas</button>
				<button class="doc-tab" aria-label="Itens a faturar">{@render icon('payer')}</button>
				<button class="doc-tab" aria-label="Geração de Notas">{@render icon('preview', 22)}</button>
				<button class="doc-tab" aria-label="Revisão de faturas">{@render icon('payer')}</button>
				<span class="doc-rest"></span>
			</div>
		</main>

		<aside class="rail">
			<div class="rail-tabs">
				<button class="reports">{@render icon('preview', 22)}<span>Relatórios</span></button>
				<button aria-label="Voltar">{@render icon('back', 20)}</button>
				<button aria-label="Avançar">{@render icon('forward', 20)}</button>
			</div>
		</aside>
	</div>

	<footer class="status">
		<span>Greg Araujo</span>
		<span class="num-lock">NUM</span>
		<span>01/02/2019 15:55:26</span>
	</footer>
</div>

<style>
	:global(body) {
		margin: 0;
	}

	.window {
		--navy: #0b3193;
		--sky: #c3d9f9;
		--ui: 'Liberation Sans', Arial, sans-serif;
		--tahoma: 'DejaVu Sans Condensed', Tahoma, sans-serif;
		display: flex;
		flex-direction: column;
		height: 100vh;
		overflow: hidden;
		background: var(--sky);
		color: #111;
		font: 16px/20px var(--ui);
	}

	.window *,
	.window *::before {
		box-sizing: border-box;
	}

	.defs {
		position: absolute;
	}

	button,
	input,
	select {
		font: inherit;
		color: inherit;
		margin: 0;
		padding: 0;
		border: 0;
		border-radius: 0;
		background: none;
	}

	h1, h2, h3, ul, dl, dd {
		margin: 0;
		padding: 0;
		list-style: none;
	}

	.icon,
	.tri {
		flex: none;
		display: block;
	}

	/* title, menu and tool bars */

	.titlebar {
		display: flex;
		align-items: center;
		height: 34px;
		padding: 0 4px 2px;
		background: #4a4846;
		color: #fff;
	}

	.app-name {
		flex: 1;
		padding-left: 6px;
		font: 17px/20px 'Noto Sans', sans-serif;
	}

	.titlebar button {
		display: grid;
		place-items: center;
		width: 67px;
		height: 28px;
	}

	.titlebar button path {
		fill: none;
		stroke: #fff;
		stroke-width: 1.3;
	}

	.menubar {
		display: flex;
		gap: 21px;
		height: 34px;
		padding: 2px 10px 0;
		background: linear-gradient(90deg, #a6c3f6, #c3d9f9 70%);
	}

	.toolbars {
		display: flex;
		gap: 3px;
		height: 39px;
		padding-left: 2px;
		background: linear-gradient(90deg, #a6c3f6, #c3d9f9 70%);
	}

	.toolbar {
		display: flex;
		align-items: center;
		border-bottom: 2px solid #4c73b8;
		border-radius: 6px 0 0 6px;
		background: linear-gradient(#dbe9fd, #bed4f8 50%, #7fa6e4);
	}

	.toolbar.first {
		border-radius: 6px;
	}

	.toolbar button {
		position: relative;
		display: flex;
		align-items: center;
		gap: 11px;
		height: 33px;
		padding: 0 9px 0 5px;
		white-space: nowrap;
	}

	.toolbar.first button {
		gap: 8px;
		padding-right: 13px;
	}

	.toolbar.first button.only {
		padding: 0 8px;
	}

	.toolbar.first button.only:last-child {
		padding: 0 6px 0 8px;
	}

	.sep {
		width: 2px;
		height: 26px;
		margin-right: 2px;
		border-left: 1px solid #6a8ccb;
		border-right: 1px solid #fff;
	}

	.toolbar button.hot {
		background: linear-gradient(#fff2cd, #ffd08c);
		box-shadow: inset 0 0 0 1px #20418f;
	}

	.pointer {
		position: absolute;
		top: 46px;
		left: calc(50% - 46px);
		z-index: 2;
		pointer-events: none;
	}

	.pointer path {
		fill: none;
		stroke: #f00;
		stroke-width: 6;
	}

	.toolbar button.more {
		align-items: flex-end;
		height: 39px;
		margin-bottom: -2px;
		padding: 0 4px 6px;
		border-radius: 0 6px 6px 0;
		background: linear-gradient(#6b9de8, #0b3193);
	}

	/* shell */

	.workspace {
		display: flex;
		flex: 1;
		gap: 5px;
		min-height: 0;
		padding: 4px 0 0 5px;
	}

	.sidebar {
		display: flex;
		flex-direction: column;
		gap: 3px;
		width: 402px;
	}

	.box {
		display: flex;
		flex-direction: column;
		border: 1px solid var(--navy);
	}

	.box.grow {
		flex: 1;
		min-height: 0;
	}

	.caption {
		display: flex;
		align-items: center;
		justify-content: space-between;
		height: 38px;
		padding: 0 8px 1px 9px;
		background: linear-gradient(#4f80d3, #0a329a);
		color: #fff;
		font: bold 22px/28px var(--tahoma);
	}

	.subcaption {
		height: 33px;
		padding: 4px 8px;
		border-bottom: 2px solid var(--navy);
		background: linear-gradient(#d9e8fd, #c3d9f9 50%, #9dbdee);
		font: 16px/22px var(--tahoma);
	}

	.pane {
		display: grid;
		grid-template: minmax(0, 1fr) 25px / minmax(0, 1fr) 25px;
		padding: 3px 1px 0;
	}

	.pane-body {
		overflow: hidden;
	}

	.alerts {
		height: 94px;
		background: #f4f4f4;
	}

	.alerts li {
		display: flex;
		align-items: center;
		gap: 8px;
		height: 26px;
		padding-left: 7px;
		white-space: nowrap;
	}

	.unread {
		font-weight: bold;
	}

	.vscroll,
	.hscroll {
		display: flex;
		background: #f6f6f6;
	}

	.vscroll {
		flex-direction: column;
	}

	.vscroll button,
	.hscroll button,
	.thumb {
		display: grid;
		place-items: center;
		flex: none;
		width: 25px;
		height: 25px;
		border-right: 2px solid #777;
		border-bottom: 2px solid #777;
		background: #f0f0f0;
	}

	.alerts .vscroll button {
		height: 24px;
	}

	.vscroll .end {
		margin-top: auto;
	}

	.hscroll .end {
		margin-left: auto;
	}

	.thumb.thin {
		height: 12px;
	}

	.thumb.short {
		height: 20px;
		margin-top: 17px;
	}

	.thumb.half {
		width: 196px;
	}

	.thumb.wide {
		width: 310px;
	}

	.tree {
		flex: 1;
		min-height: 0;
		padding: 2px 3px;
		background: #fff;
	}

	.tree li {
		display: flex;
		align-items: center;
		height: 25px;
		padding-left: 31px;
	}

	.trunk,
	.branch {
		height: 25px;
		border-left: 1px dotted #777;
	}

	.trunk {
		width: 22px;
	}

	.branch {
		width: 14px;
	}

	.branch::before,
	.twig {
		display: block;
		height: 13px;
		border-bottom: 1px dotted #777;
		content: '';
	}

	.branch.last {
		height: 13px;
		margin-bottom: 12px;
	}

	.expander {
		width: 13px;
		height: 13px;
		margin-left: -6px;
		border: 1px solid #888;
		background: #fff;
		color: #24439c;
		font: 12px/10px var(--ui);
		text-align: center;
	}

	.twig {
		width: 7px;
		height: 1px;
	}

	.node {
		padding: 1px 6px 2px 4px;
		margin-left: 4px;
		white-space: nowrap;
	}

	.node.selected {
		background: #efefef;
	}

	.splitter {
		display: flex;
		align-items: center;
		justify-content: center;
		gap: 3px;
		height: 12px;
		border-top: 2px solid var(--navy);
		background: linear-gradient(#4f80d3, #1c49ab);
	}

	.splitter i {
		width: 3px;
		height: 3px;
		background: #fff;
	}

	.modules button,
	.filler {
		display: flex;
		align-items: center;
		gap: 16px;
		width: 100%;
		height: 47px;
		padding: 0 16px 1px;
		border-top: 1px solid var(--navy);
		background: linear-gradient(#c5dcfa, #86aae3);
		font: bold 16px/20px var(--tahoma);
		text-align: left;
	}

	.modules button.active {
		background: linear-gradient(#fbdc87, #ee9d23);
	}

	.modules .filler {
		height: 44px;
	}

	.document {
		display: flex;
		flex: 1;
		flex-direction: column;
		min-width: 0;
		border: 2px solid var(--navy);
		border-width: 1px 2px;
	}

	.document > .caption {
		padding: 0 10px 1px 6px;
		border-bottom: 1px solid #082574;
	}

	.caption-tools {
		display: flex;
		align-items: center;
		gap: 16px;
	}

	/* search */

	.search {
		border-bottom: 1px solid var(--navy);
		background: #fff;
	}

	.tabstrip {
		display: flex;
		height: 33px;
		padding-left: 2px;
		background: linear-gradient(#efefef 32px, #ddd 32px);
	}

	.search-tab {
		display: flex;
		align-items: center;
		gap: 8px;
		padding: 0 20px 2px 6px;
		border-right: 1px solid #ddd;
		background: #fff;
		font: 16px/20px var(--tahoma);
	}

	.search-body {
		padding: 6px 4px 9px 8px;
		margin-right: 5px;
		border-right: 1px solid #ddd;
	}

	fieldset {
		min-width: 0;
		margin: 0;
		padding: 0;
		border: 1px solid #5d82c8;
		border-radius: 6px;
	}

	legend {
		margin-left: 12px;
		padding: 0 2px;
		font: 16px/20px var(--tahoma);
	}

	.filters {
		padding-bottom: 20px;
	}

	.filter-row {
		display: flex;
		align-items: flex-start;
		padding-left: 11px;
	}

	.lower {
		margin-top: 12px;
	}

	.wide-fields {
		display: flex;
		flex: 1;
		flex-direction: column;
		gap: 8px;
	}

	.field {
		display: flex;
		align-items: center;
		height: 28px;
	}

	.field label {
		flex: none;
		width: 90px;
		padding-top: 5px;
	}

	.field label,
	.range label,
	.range-label,
	.info dt {
		color: #000;
		font-weight: bold;
		white-space: nowrap;
	}

	.combo,
	.field > input {
		height: 28px;
		border: 2px solid #777;
		border-color: #777 #e4e4e4 #e4e4e4 #777;
		background: #fff;
		font-family: var(--tahoma);
	}

	.combo {
		display: flex;
		flex: 1;
		min-width: 0;
	}

	.combo select {
		flex: 1;
		min-width: 0;
		padding: 3px 3px 0;
		appearance: none;
	}

	.combo-arrow {
		display: grid;
		place-items: center;
		width: 24px;
		border-right: 2px solid #777;
		border-bottom: 2px solid #777;
		background: #f0f0f0;
	}

	.dots {
		width: 26px;
		height: 26px;
		margin-left: 13px;
		border: 1px solid #adadad;
		background: #e1e1e1;
		font-weight: bold;
		line-height: 20px;
	}

	.small-fields {
		display: grid;
		grid-template-columns: 198px 240px;
		gap: 12px 35px;
	}

	.field > input {
		width: 108px;
		padding: 0 2px;
	}

	.field > input.num {
		text-align: right;
	}

	.flat .combo {
		border: 1px solid #ccc;
		border-radius: 3px;
	}

	.flat .combo-arrow {
		border: 0;
		background: none;
	}

	.kind {
		width: 257px;
		height: 74px;
		margin: 0 128px 0 50px;
	}

	.checks {
		display: flex;
		gap: 15px;
		padding: 12px 14px;
		font-family: var(--tahoma);
	}

	.checks label {
		display: flex;
		align-items: center;
		gap: 9px;
	}

	.checks input {
		width: 19px;
		height: 19px;
		border: 2px solid #17398f;
		background: linear-gradient(135deg, #b4ccf5, #eef4fe);
		appearance: none;
	}

	.checks input:checked::before {
		display: block;
		width: 5px;
		height: 9px;
		margin: 1px 0 0 4px;
		border: solid #17509e;
		border-width: 0 3px 3px 0;
		content: '';
		transform: rotate(40deg);
	}

	.period {
		width: 519px;
		height: 106px;
		margin: 4px 11px 0 auto;
		padding-right: 3px;
	}

	.range {
		display: flex;
		height: 30px;
		margin-top: 7px;
		padding-left: 49px;
	}

	legend + .range {
		margin-top: 10px;
	}

	.range label,
	.range-label {
		flex: 1;
		padding-top: 9px;
	}

	.and {
		width: 37px;
		padding-top: 10px;
		text-align: center;
	}

	.slot {
		width: 146px;
	}

	.picker {
		display: flex;
		width: 146px;
		height: 30px;
		border: 2px solid #26489f;
		background: #fff;
		font-family: var(--tahoma);
	}

	.picker.short {
		width: 105px;
	}

	.picker input {
		flex: 1;
		min-width: 0;
		padding: 1px 6px 0;
	}

	.picker.short input {
		padding-left: 30px;
	}

	.picker button {
		display: grid;
		place-items: center;
		width: 19px;
		border-left: 2px solid #26489f;
		background: linear-gradient(#dbe8fd, #8fb2ec);
	}

	.spin {
		display: flex;
		flex-direction: column;
	}

	.spin button {
		flex: 1;
	}

	.spin button + button {
		border-top: 1px solid #26489f;
	}

	.find {
		width: 99px;
		height: 35px;
		margin: 72px 18px 0 0;
		padding: 1px;
		border: 2px solid #1173c7;
		background: #1173c7;
		font-family: var(--tahoma);
	}

	.find span {
		display: flex;
		align-items: center;
		gap: 3px;
		height: 29px;
		overflow: hidden;
		border: 1px dotted #fff;
		background: #e1e1e1;
	}

	/* result grid */

	.grid {
		height: 117px;
		border: 1px solid #17398f;
	}

	table {
		width: 100%;
		table-layout: fixed;
		border-collapse: collapse;
	}

	th,
	td {
		height: 26px;
		padding: 0 4px;
		overflow: hidden;
		font-weight: normal;
		text-align: left;
		white-space: nowrap;
	}

	th {
		height: 29px;
		padding: 0 6px;
		border-right: 1px solid #7f9cd4;
		background: linear-gradient(#e2edfd, #a6c2f3);
		box-shadow: inset 1px 0 #eef4fe;
	}

	th:last-child {
		border-right: 0;
	}

	td:first-child {
		padding: 0 2px;
	}

	th.center,
	td.center {
		padding: 0;
		text-align: center;
	}

	th.right,
	td.right {
		text-align: right;
	}

	th.left {
		text-align: left;
	}

	.sort {
		margin: 0 0 3px 10px;
	}

	.current td {
		height: 27px;
		background: #0078d7;
		border-bottom: 1px dotted #b7d7f5;
		color: #fff;
	}

	tfoot td {
		height: 33px;
		padding-top: 5px;
		border-bottom: 1px dotted #4a67a8;
		background: linear-gradient(#c9dcfa 5px, #6c8fd0 5px, #6c8fd0 6px, #fff 6px);
	}

	/* invoice details */

	.details {
		display: flex;
		flex: 1;
		flex-direction: column;
		min-height: 0;
		margin-top: 6px;
		padding: 10px 16px 14px 13px;
		border-top: 1px solid var(--navy);
	}

	.detail-tabs {
		display: flex;
		align-items: flex-end;
		font-family: var(--tahoma);
	}

	.detail-tabs button {
		display: flex;
		align-items: center;
		gap: 10px;
		height: 29px;
		padding: 0 13px 0 4px;
		border-right: 1px solid #d6d6d6;
		background: #efefef;
	}

	.detail-tabs button.active {
		gap: 11px;
		height: 33px;
		padding: 0 18px 2px 5px;
		background: #fff;
	}

	.detail-pane {
		display: flex;
		flex: 1;
		min-height: 0;
		border-bottom: 1px solid #d8d4c8;
		background: #fff;
	}

	.detail-content {
		flex: 1;
		padding: 10px 18px 0 14px;
		overflow: hidden;
	}

	.detail-content fieldset {
		margin-bottom: 5px;
	}

	.info {
		display: grid;
		grid-template-columns: 130px 353px 222px 1fr;
		grid-auto-rows: 30px;
		align-items: center;
		padding: 7px 0 4px 11px;
	}

	.info.payer {
		grid-auto-rows: 32px;
		grid-template-columns: 127px 353px 222px 1fr;
		padding: 6px 0 4px 14px;
	}

	.info dd {
		font-family: var(--tahoma);
	}

	.info dd.raised {
		padding-bottom: 6px;
	}

	.info dd.money {
		font-family: var(--ui);
	}

	.modern-scroll {
		display: flex;
		flex-direction: column;
		align-items: center;
		width: 20px;
		margin: 2px 3px 0 0;
		padding: 8px 0;
		background: #f0f0f0;
	}

	.modern-scroll span {
		width: 20px;
		height: 230px;
		margin: 8px 0 auto;
		background: #cdcdcd;
	}

	.modern-scroll path {
		fill: none;
		stroke: #505050;
		stroke-width: 2;
	}

	/* open documents */

	.doc-tabs {
		display: flex;
		height: 34px;
		padding-bottom: 1px;
		background: linear-gradient(#fff, #cfe0fb);
	}

	.doc-tab {
		display: flex;
		align-items: center;
		justify-content: center;
		gap: 11px;
		width: 57px;
		height: 30px;
		border: solid #2a4ba6;
		border-width: 1px 2px 2px 0;
		border-radius: 0 0 6px 6px;
		background: linear-gradient(#adc6f5, #dce8fc);
		font: bold 16px/20px var(--tahoma);
	}

	.doc-tab.current {
		width: auto;
		height: 33px;
		padding: 2px 18px 0 6px;
		border-top: 0;
		border-radius: 0 0 6px 0;
	}

	.doc-rest {
		flex: 1;
		border-top: 1px solid #2a4ba6;
	}

	.rail {
		width: 29px;
		padding-top: 3px;
		background: linear-gradient(90deg, #cddffa, #a3c0f3);
	}

	.rail-tabs {
		display: flex;
		flex-direction: column;
		margin-left: 1px;
		border: solid #1f449f;
		border-width: 2px 0 1px 2px;
		background: linear-gradient(90deg, #dfebfd, #a9c5f4);
	}

	.rail-tabs button {
		display: flex;
		flex-direction: column;
		align-items: center;
		justify-content: center;
		height: 33px;
		border-bottom: 1px solid #1f449f;
	}

	.rail-tabs .reports {
		justify-content: flex-start;
		gap: 8px;
		height: 130px;
		padding-top: 5px;
		font: bold 16px/20px var(--tahoma);
	}

	.reports span {
		writing-mode: vertical-rl;
	}

	.status {
		display: flex;
		gap: 130px;
		height: 29px;
		padding: 7px 17px 0 8px;
		background: linear-gradient(#c5dafa, #9ebcf2);
	}

	.num-lock {
		margin-left: auto;
	}
</style>
